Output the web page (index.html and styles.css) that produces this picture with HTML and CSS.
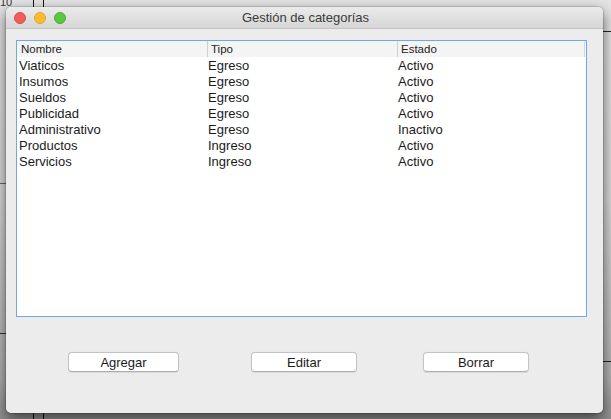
FILE: index.html
```html
<!DOCTYPE html>
<html lang="es">
<head>
<meta charset="utf-8">
<title>Gestión de categorías</title>
<link rel="stylesheet" href="styles.css">
</head>
<body>
<div class="desktop">
  <span class="desk-num">10</span>
  <span class="desk-vline desk-v1"></span>
  <span class="desk-vline desk-v2"></span>
  <span class="desk-hline desk-h1"></span>
  <span class="desk-hline desk-h2"></span>
  <span class="desk-hline desk-h3"></span>
  <span class="desk-hline desk-h4"></span>
</div>

<div class="window">
  <div class="titlebar">
    <div class="lights">
      <span class="light red"></span>
      <span class="light yellow"></span>
      <span class="light green"></span>
    </div>
    <div class="title">Gestión de categorías</div>
  </div>

  <div class="content">
    <div class="table">
      <div class="thead">
        <div class="th first">Nombre</div>
        <div class="th">Tipo</div>
        <div class="th last">Estado</div>
      </div>
      <div class="tbody">
        <div class="tr"><div class="td c1">Viaticos</div><div class="td">Egreso</div><div class="td">Activo</div></div>
        <div class="tr"><div class="td c1">Insumos</div><div class="td">Egreso</div><div class="td">Activo</div></div>
        <div class="tr"><div class="td c1">Sueldos</div><div class="td">Egreso</div><div class="td">Activo</div></div>
        <div class="tr"><div class="td c1">Publicidad</div><div class="td">Egreso</div><div class="td">Activo</div></div>
        <div class="tr"><div class="td c1">Administrativo</div><div class="td">Egreso</div><div class="td">Inactivo</div></div>
        <div class="tr"><div class="td c1">Productos</div><div class="td">Ingreso</div><div class="td">Activo</div></div>
        <div class="tr"><div class="td c1">Servicios</div><div class="td">Ingreso</div><div class="td">Activo</div></div>
      </div>
    </div>

    <div class="buttons">
      <button class="btn btn-add">Agregar</button>
      <button class="btn btn-edit">Editar</button>
      <button class="btn btn-del">Borrar</button>
    </div>
  </div>
</div>
</body>
</html>
```

FILE: styles.css
```css
html, body {
  margin: 0;
  padding: 0;
}

body {
  width: 611px;
  height: 419px;
  overflow: hidden;
  position: relative;
  background: linear-gradient(to bottom, #e4e4e4 0px, #d8d8d8 200px, #b0b0b0 380px, #8e8e8e 419px);
  font-family: "Liberation Sans", Arial, sans-serif;
  color: #1e1e1e;
}

/* ---- desktop behind the window ---- */
.desktop {
  position: absolute;
  inset: 0;
}

.desk-num {
  position: absolute;
  left: 0;
  top: -4px;
  font-size: 11px;
  line-height: 12px;
  color: #333;
}

.desk-vline {
  position: absolute;
  top: 0;
  bottom: 0;
  width: 1px;
  background: #111;
}
.desk-v1 { left: 33px; }
.desk-v2 { left: 43px; }

.desk-hline {
  position: absolute;
  height: 1px;
  background: #222;
}
.desk-h1 { right: 0; width: 10px; top: 31px; }
.desk-h2 { right: 0; width: 10px; top: 361px; }
.desk-h3 { left: 0; width: 8px; top: 183px; background: #666; }
.desk-h4 { left: 0; width: 8px; top: 333px; background: #333; }

/* ---- window ---- */
.window {
  position: absolute;
  left: 6px;
  top: 7px;
  width: 597px;
  height: 406px;
  border-radius: 5px;
  background: #ececec;
  box-shadow: 0 5px 14px rgba(0, 0, 0, 0.6), 0 0 0 1px rgba(0, 0, 0, 0.12);
  overflow: hidden;
  display: flex;
  flex-direction: column;
}

.titlebar {
  height: 22px;
  flex: 0 0 22px;
  position: relative;
  background: linear-gradient(to bottom, #ebebeb, #d6d6d6);
  border-bottom: 1px solid #c4c4c4;
  box-sizing: border-box;
  display: flex;
  align-items: center;
  justify-content: center;
}

.lights {
  position: absolute;
  left: 8px;
  top: 5px;
  display: flex;
  gap: 8px;
}

.light {
  width: 12px;
  height: 12px;
  border-radius: 50%;
  box-sizing: border-box;
}
.red { background: #f05f57; border: 1px solid #dc4b44; }
.yellow { background: #fbbc2f; border: 1px solid #e0a22a; }
.green { background: #5cc63f; border: 1px solid #48ad33; }

.title {
  font-size: 13px;
  color: #3a3a3a;
  line-height: 22px;
  padding-left: 2px;
}

.content {
  flex: 1;
  padding: 11px 16px 0 10px;
  display: flex;
  flex-direction: column;
}

/* ---- table ---- */
.table {
  height: 277px;
  box-sizing: border-box;
  border: 1px solid #6fa8e4;
  background: #ffffff;
  display: flex;
  flex-direction: column;
}

.thead {
  height: 16px;
  display: grid;
  grid-template-columns: 190px 190px 1fr;
  background: #f4f4f4;
  font-size: 11.5px;
  line-height: 16px;
  color: #222;
}

.th {
  padding-left: 3px;
  border-left: 1px solid #cfcfcf;
  box-sizing: border-box;
}
.th.first {
  border-left: none;
  padding-left: 4px;
}
.th.last {
  border-right: 1px solid #d6d6d6;
  margin-right: 1px;
}

.tbody {
  padding-top: 1px;
}

.tr {
  display: grid;
  grid-template-columns: 190px 190px 1fr;
  height: 16px;
  font-size: 13px;
  line-height: 16px;
  color: #1a1a1a;
}

.td {
  padding-left: 1px;
}
.td.c1 {
  padding-left: 2px;
}

/* ---- buttons ---- */
.buttons {
  display: flex;
  margin-top: 35px;
  padding-left: 52px;
}

.btn {
  height: 20px;
  box-sizing: border-box;
  border: 1px solid #c3c3c3;
  border-bottom-color: #acacac;
  border-radius: 4px;
  background: #ffffff;
  font-family: "Liberation Sans", Arial, sans-serif;
  font-size: 13px;
  color: #1a1a1a;
  line-height: 17px;
  padding: 0;
  text-align: center;
  box-shadow: 0 0.5px 1px rgba(0, 0, 0, 0.08);
}

.btn-add { width: 111px; }
.btn-edit { width: 106px; margin-left: 72px; }
.btn-del { width: 106px; margin-left: 66px; }
```
